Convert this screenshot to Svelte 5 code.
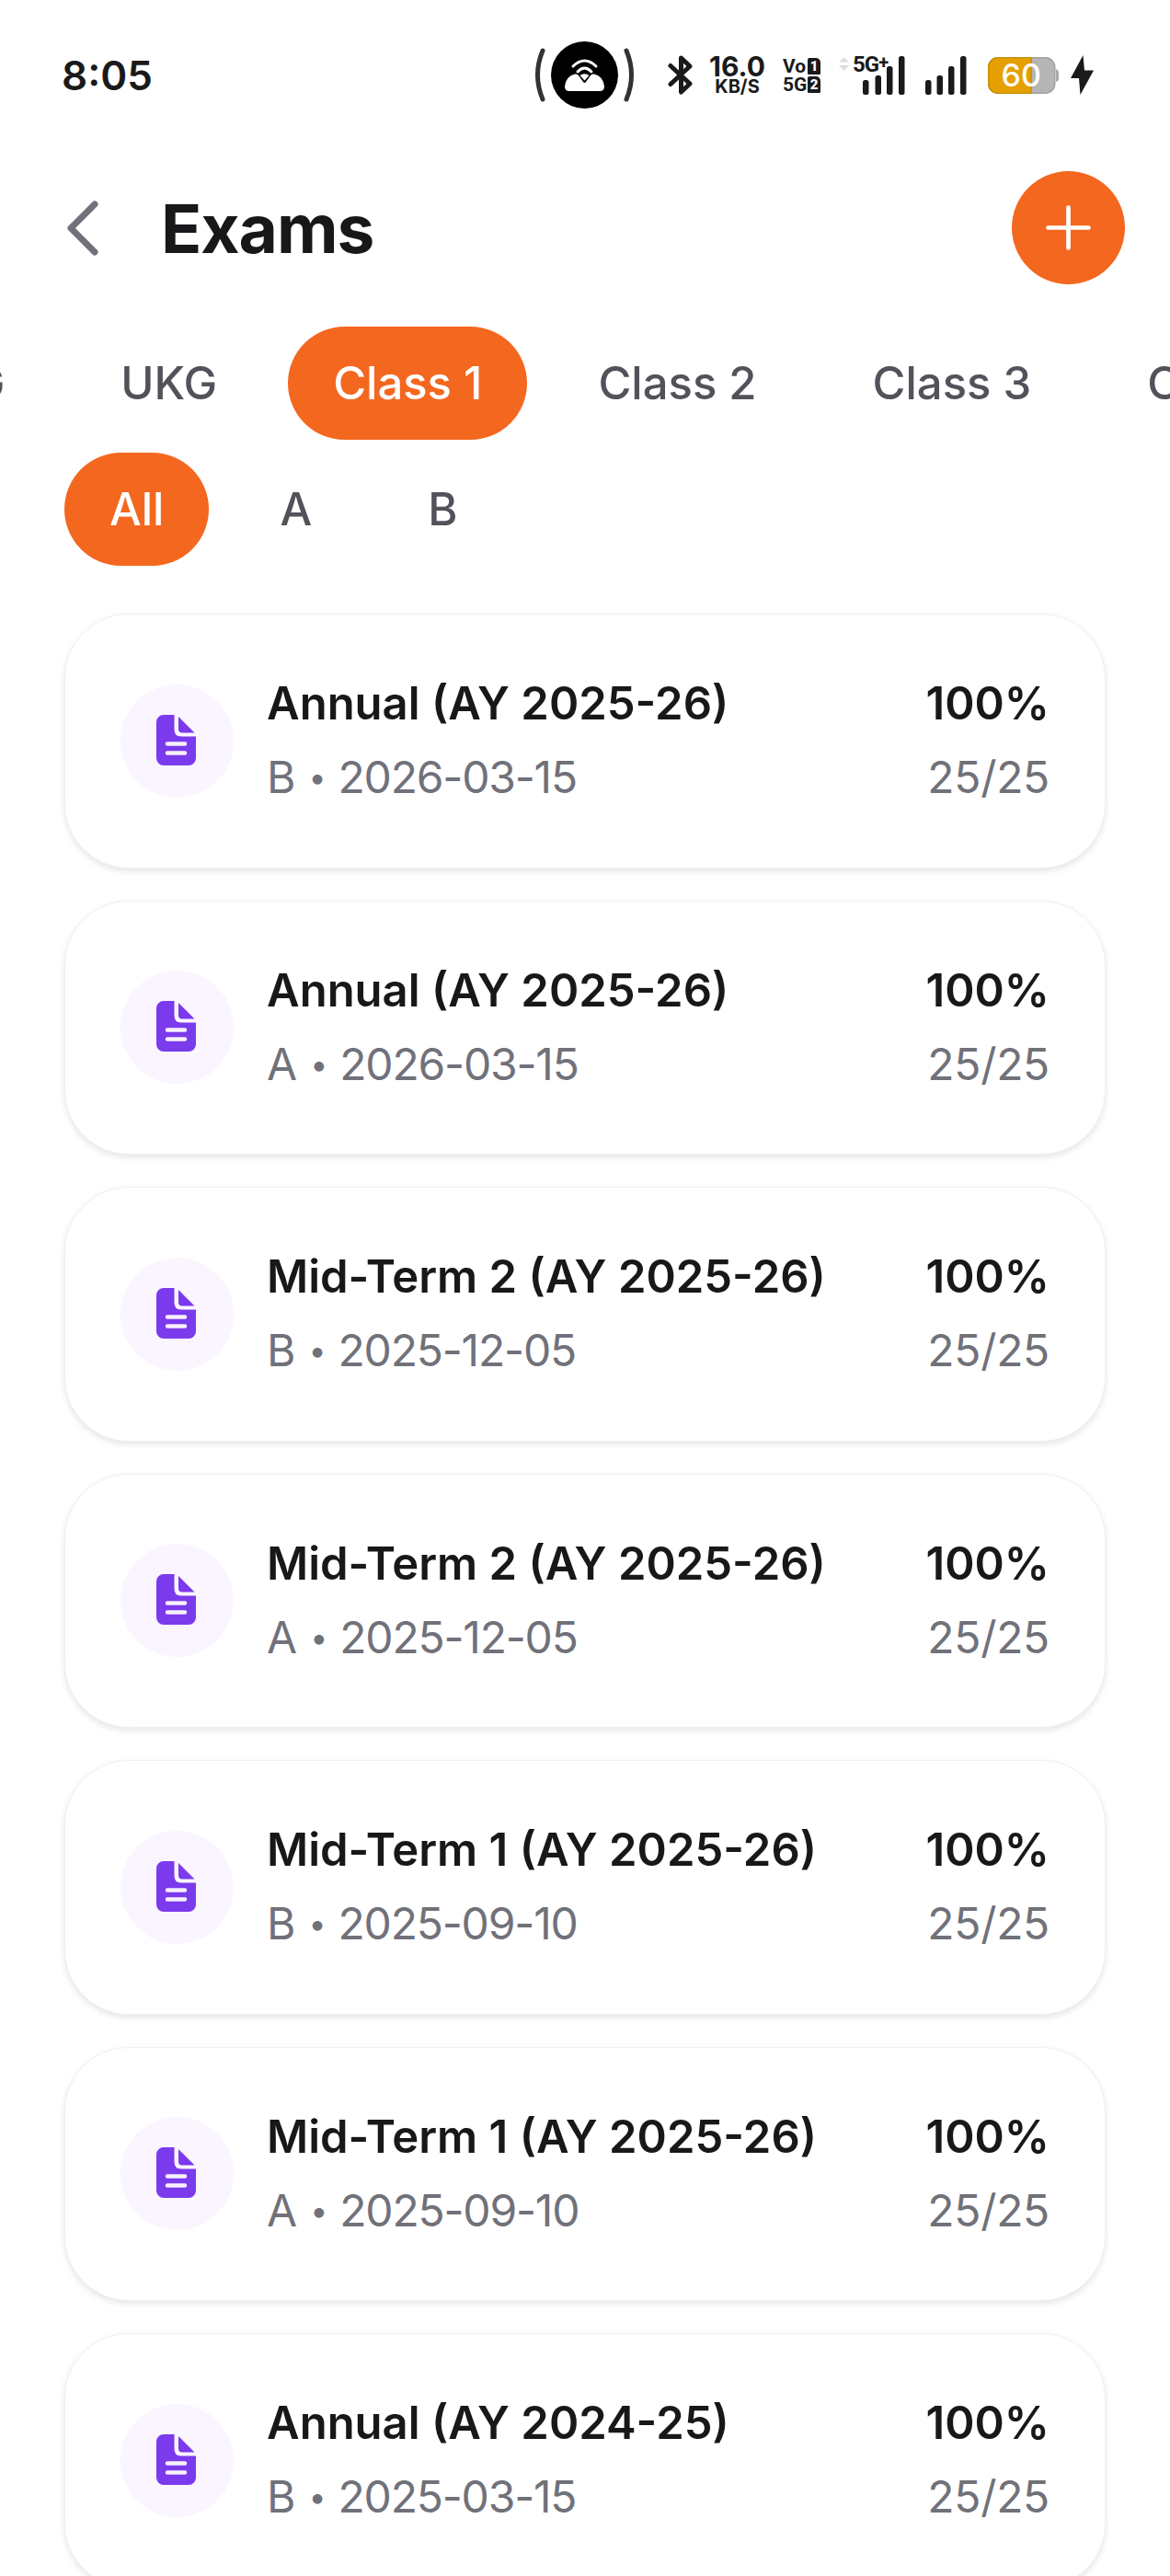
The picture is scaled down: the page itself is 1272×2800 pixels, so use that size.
<script>
	const classes = ['LKG', 'UKG', 'Class 1', 'Class 2', 'Class 3', 'Class 4'];
	const sections = ['All', 'A', 'B'];
	const exams = [
		{ name: 'Annual (AY 2025-26)', section: 'B', date: '2026-03-15' },
		{ name: 'Annual (AY 2025-26)', section: 'A', date: '2026-03-15' },
		{ name: 'Mid-Term 2 (AY 2025-26)', section: 'B', date: '2025-12-05' },
		{ name: 'Mid-Term 2 (AY 2025-26)', section: 'A', date: '2025-12-05' },
		{ name: 'Mid-Term 1 (AY 2025-26)', section: 'B', date: '2025-09-10' },
		{ name: 'Mid-Term 1 (AY 2025-26)', section: 'A', date: '2025-09-10' },
		{ name: 'Annual (AY 2024-25)', section: 'B', date: '2025-03-15' }
	];
	const activeClass = 'Class 1';
	const activeSection = 'All';
</script>

<div class="screen">
	<div class="status">
		<span class="time">8:05</span>
		<div class="status-icons">
			<svg class="hotspot" width="113" height="73" viewBox="0 0 113 73">
				<path d="M11 10 Q0 36.5 11 63" fill="none" stroke="#333" stroke-width="5" stroke-linecap="round" />
				<path d="M102 10 Q113 36.5 102 63" fill="none" stroke="#333" stroke-width="5" stroke-linecap="round" />
				<circle cx="56.5" cy="36.5" r="36.5" fill="#000" />
				<path d="M35 49 Q36 38 46 35.5 Q49 35 50 37 L55 44 Q56.5 46 58 44 L63 37 Q64 35 67 35.5 Q77 38 78 49 Q78 54 73 54 H40 Q35 54 35 49 Z" fill="#fff" />
				<path d="M44 27 Q56.5 15 69 27 M49 33 Q56.5 25 64 33" fill="none" stroke="#fff" stroke-width="3" stroke-linecap="round" />
				<path d="M51.5 37 Q56.5 33.5 61.5 37 L56.5 42.5 Z" fill="#fff" />
			</svg>
			<svg class="bt" width="27" height="43" viewBox="0 0 27 43">
				<path d="M3 11.5 L24 31 L14.5 40 V3 L24 12 L3 31.5" fill="none" stroke="#1a1a1a" stroke-width="5" stroke-linejoin="round" stroke-linecap="round" />
			</svg>
			<div class="speed">
				<span class="speed-num">16.0</span>
				<span class="speed-unit">KB/S</span>
			</div>
			<div class="sim">
				<span>Vo</span><b>1</b>
				<span>5G</span><b>2</b>
			</div>
			<svg class="net" width="73" height="42" viewBox="0 0 73 42">
				<path d="M5.5 1 L11 6.5 H0 Z M5.5 16 L11 10 H0 Z" fill="#dcdcdc" />
				<text x="15" y="17" class="net-label">5G<tspan font-size="20" dy="-3">+</tspan></text>
				<rect x="26" y="26" width="6.5" height="16" rx="2.5" fill="#1a1a1a" />
				<rect x="39.5" y="21" width="6.5" height="21" rx="2.5" fill="#1a1a1a" />
				<rect x="52" y="11" width="6.5" height="31" rx="2.5" fill="#1a1a1a" />
				<rect x="65" y="0" width="6.5" height="42" rx="2.5" fill="#1a1a1a" />
			</svg>
			<svg class="signal" width="45" height="42" viewBox="0 0 45 42">
				<rect x="0" y="26" width="6.5" height="16" rx="2.5" fill="#1a1a1a" />
				<rect x="12.5" y="21" width="6.5" height="21" rx="2.5" fill="#1a1a1a" />
				<rect x="25" y="11" width="6.5" height="31" rx="2.5" fill="#1a1a1a" />
				<rect x="38" y="0" width="6.5" height="42" rx="2.5" fill="#1a1a1a" />
			</svg>
			<svg class="battery" width="77" height="40" viewBox="0 0 77 40">
				<rect x="0.75" y="0.75" width="72" height="38.5" rx="10" fill="#b5b5b5" stroke="#a0a0a0" stroke-width="1.5" />
				<path d="M47 0.75 H10.75 A10 10 0 0 0 0.75 10.75 V29.25 A10 10 0 0 0 10.75 39.25 H47 Z" fill="#e5a000" stroke="#c99000" stroke-width="1.5" />
				<path d="M74 13 Q77 14 77 17 V23 Q77 26 74 27 Z" fill="#a8a8a8" />
				<text x="14.5" y="32" class="battery-label">60</text>
			</svg>
			<svg class="bolt" width="25" height="43" viewBox="0 0 25 43">
				<path d="M13.5 0 L0 25 H9 L10.5 43 L25 16.5 H15 Z" fill="#1a1a1a" />
			</svg>
		</div>
	</div>

	<header>
		<div class="title-group">
			<svg width="36" height="60" viewBox="0 0 36 60">
				<path d="M31 4 L5 30 L31 56" fill="none" stroke="#71717a" stroke-width="7" stroke-linecap="round" stroke-linejoin="round" />
			</svg>
			<h1>Exams</h1>
		</div>
		<button class="add" aria-label="Add exam">
			<svg width="52" height="52" viewBox="0 0 52 52">
				<path d="M25.5 3.5 V47.5 M3.5 25.5 H47.5" stroke="#fff" stroke-width="4.7" stroke-linecap="round" />
			</svg>
		</button>
	</header>

	<div class="tabs classes">
		{#each classes as c}
			<span class="tab" class:active={c === activeClass}>{c}</span>
		{/each}
	</div>
	<div class="tabs sections">
		{#each sections as s}
			<span class="tab" class:active={s === activeSection}>{s}</span>
		{/each}
	</div>

	<div class="list">
		{#each exams as exam}
			<div class="card">
				<div class="icon">
					<svg width="43" height="55" viewBox="0 0 43 55">
						<path d="M8 0 H19.5 V16 Q19.5 23.5 27 23.5 H43 V47 A8 8 0 0 1 35 55 H8 A8 8 0 0 1 0 47 V8 A8 8 0 0 1 8 0 Z" fill="#7c3aed" />
						<path d="M24 2 L41.5 19.5 H28 Q24 19.5 24 15.5 Z" fill="#7c3aed" />
						<path d="M12 31.5 H31 M12 41.5 H31" stroke="#f7f0ff" stroke-width="4.5" stroke-linecap="round" />
					</svg>
				</div>
				<div class="info">
					<div class="name">{exam.name}</div>
					<div class="meta">{exam.section}<span class="dot">•</span><span class="date">{exam.date}</span></div>
				</div>
				<div class="score">
					<div class="pct">100%</div>
					<div class="meta count">25/25</div>
				</div>
			</div>
		{/each}
	</div>
</div>

<style>
	:global(body) {
		background: #fff;
	}
	.screen {
		height: 2800px;
		overflow: hidden;
		background: #fff;
		font-family: Inter, 'Noto Sans', sans-serif;
		color: #18181b;
	}
	.status {
		display: flex;
		justify-content: space-between;
		align-items: center;
		height: 73px;
		padding: 45px 83px 0 67px;
	}
	.time {
		font-size: 44px;
		font-weight: 600;
		color: #1a1a1a;
	}
	.status-icons {
		display: flex;
		align-items: center;
	}
	.bt {
		margin-left: 34px;
	}
	.speed {
		margin-left: 16px;
		width: 65px;
		display: flex;
		flex-direction: column;
		align-items: center;
		font-weight: 700;
		color: #1a1a1a;
	}
	.speed-num {
		font-size: 30px;
		line-height: 25px;
	}
	.speed-unit {
		font-size: 20px;
		line-height: 18px;
	}
	.sim {
		margin-left: 17px;
		display: grid;
		grid-template-columns: 23px 14px;
		column-gap: 4px;
		row-gap: 2px;
		font-family: 'Liberation Sans Narrow', Roboto, sans-serif;
		font-size: 21px;
		font-weight: 700;
		line-height: 18px;
		color: #1a1a1a;
		text-align: center;
	}
	.sim b {
		background: #1a1a1a;
		color: #fff;
		font-family: Roboto, sans-serif;
		font-size: 15px;
		border-radius: 2px 5px 1px 1px;
	}
	.net {
		margin-left: 20px;
		overflow: visible;
	}
	.net-label {
		font-family: Roboto, sans-serif;
		font-size: 24px;
		font-weight: 700;
		fill: #1a1a1a;
		letter-spacing: -1px;
	}
	.signal {
		margin-left: 21px;
	}
	.battery {
		margin-left: 23px;
	}
	.battery-label {
		font-size: 34px;
		font-weight: 500;
		fill: #fff;
	}
	.bolt {
		margin-left: 13px;
	}
	header {
		display: flex;
		justify-content: space-between;
		align-items: center;
		margin-top: 68px;
		padding: 0 49px 0 72px;
	}
	.title-group {
		display: flex;
		align-items: center;
		gap: 67px;
	}
	h1 {
		margin: 3px 0 0;
		font-size: 73px;
		font-weight: 700;
		line-height: 1.2;
		color: #18181b;
		letter-spacing: -1px;
	}
	.add {
		width: 123px;
		height: 123px;
		border: none;
		border-radius: 50%;
		background: #f4671e;
		display: flex;
		align-items: center;
		justify-content: center;
		padding: 0;
	}
	.tabs {
		display: flex;
		gap: 28px;
		overflow: hidden;
		height: 123px;
		white-space: nowrap;
	}
	.classes {
		margin-top: 46px;
	}
	.classes .tab:first-child {
		margin-left: -140px;
	}
	.sections {
		margin-top: 14px;
		padding-left: 70px;
	}
	.tab {
		display: flex;
		align-items: center;
		flex: none;
		padding: 0 49px;
		border-radius: 62px;
		font-size: 49px;
		font-weight: 500;
		color: #52525b;
	}
	.tab.active {
		background: #f4671e;
		color: #fff;
	}
	.list {
		display: flex;
		flex-direction: column;
		gap: 35px;
		margin: 52px 70px 0;
	}
	.card {
		display: flex;
		align-items: center;
		flex: none;
		height: 276.5px;
		box-sizing: border-box;
		padding: 0 60px;
		background: #fff;
		border: 1px solid #f0f0f2;
		border-radius: 70px;
		box-shadow: 0 3px 7px rgba(0, 0, 0, 0.1);
	}
	.icon {
		flex: none;
		width: 123px;
		height: 123px;
		margin-right: 36px;
		border-radius: 50%;
		background: #faf5ff;
		display: flex;
		align-items: center;
		justify-content: center;
	}
	.icon svg {
		margin: -2px 2px 0 0;
	}
	.info {
		flex: 1;
	}
	.name,
	.pct {
		font-size: 49px;
		font-weight: 600;
		line-height: 60px;
		color: #18181b;
	}
	.meta {
		margin-top: 20px;
		font-size: 48px;
		line-height: 60px;
		color: #71717a;
	}
	.dot {
		margin: 0 13px 0 14px;
		font-size: 34px;
		line-height: 0;
		vertical-align: 5px;
	}
	.date {
		letter-spacing: -1.2px;
	}
	.count {
		letter-spacing: -0.3px;
	}
	.score {
		text-align: right;
	}
</style>
